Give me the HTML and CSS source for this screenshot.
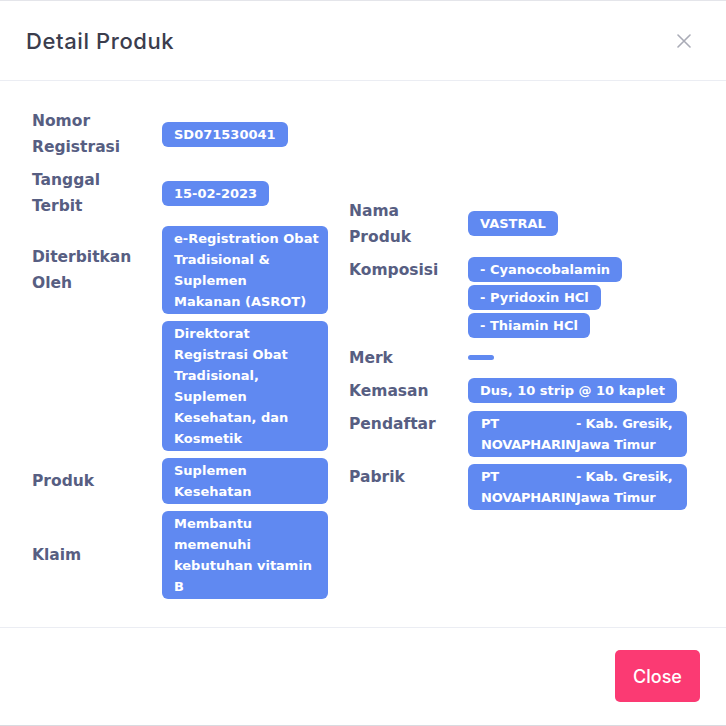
FILE: index.html
```html
<!DOCTYPE html>
<html lang="id">
<head>
<meta charset="utf-8">
<title>Detail Produk</title>
<link rel="stylesheet" href="styles.css">
</head>
<body>
<div class="modal">
  <header class="modal-header">
    <h2 class="modal-title">Detail Produk</h2>
    <button class="close-x" aria-label="Close">
      <svg width="14" height="14" viewBox="0 0 14 14"><path d="M1 1L13 13M13 1L1 13" stroke="#a9abb6" stroke-width="1.6" fill="none" stroke-linecap="round"/></svg>
    </button>
  </header>
  <div class="modal-body">
    <div class="columns">
      <div class="fields fields-left">
        <div class="label">Nomor<br>Registrasi</div>
        <div class="value"><span class="badge">SD071530041</span></div>

        <div class="label">Tanggal<br>Terbit</div>
        <div class="value"><span class="badge">15-02-2023</span></div>

        <div class="label">Diterbitkan<br>Oleh</div>
        <div class="value"><span class="badge block">e-Registration Obat Tradisional &amp; Suplemen<br>Makanan (ASROT)</span></div>

        <div class="label"></div>
        <div class="value"><span class="badge block">Direktorat Registrasi Obat Tradisional, Suplemen Kesehatan, dan Kosmetik</span></div>

        <div class="label">Produk</div>
        <div class="value"><span class="badge block">Suplemen Kesehatan</span></div>

        <div class="label">Klaim</div>
        <div class="value"><span class="badge block">Membantu memenuhi kebutuhan vitamin B</span></div>
      </div>

      <div class="fields fields-right">
        <div class="label mid">Nama<br>Produk</div>
        <div class="value mid"><span class="badge">VASTRAL</span></div>

        <div class="label">Komposisi</div>
        <div class="value stack">
          <span class="badge">- Cyanocobalamin</span>
          <span class="badge">- Pyridoxin HCl</span>
          <span class="badge">- Thiamin HCl</span>
        </div>

        <div class="label">Merk</div>
        <div class="value mid"><span class="badge empty"></span></div>

        <div class="label">Kemasan</div>
        <div class="value"><span class="badge">Dus, 10 strip @ 10 kaplet</span></div>

        <div class="label">Pendaftar</div>
        <div class="value"><span class="badge split"><span class="part-a">PT NOVAPHARIN</span><span class="part-b">- Kab. Gresik, Jawa Timur</span></span></div>

        <div class="label">Pabrik</div>
        <div class="value"><span class="badge split"><span class="part-a">PT NOVAPHARIN</span><span class="part-b">- Kab. Gresik, Jawa Timur</span></span></div>
      </div>
    </div>
  </div>
  <footer class="modal-footer">
    <button class="btn-close">Close</button>
  </footer>
</div>
</body>
</html>
```

FILE: styles.css
```css
* { box-sizing: border-box; }
html, body { margin: 0; padding: 0; background: #ffffff; }
body { font-family: Inter, "Noto Sans", sans-serif; }

.modal {
  width: 726px;
  height: 726px;
  border-top: 1px solid #e4e5ea;
  border-bottom: 1px solid #d9dae0;
  display: flex;
  flex-direction: column;
  background: #fff;
}

.modal-header {
  height: 80px;
  flex: none;
  display: flex;
  align-items: center;
  justify-content: space-between;
  padding: 0 35px 0 26px;
  border-bottom: 1px solid #ebedf3;
}
.modal-title {
  margin: 0;
  font-size: 22px;
  font-weight: 500;
  color: #3b3d4d;
  letter-spacing: 0.6px;
}
.close-x {
  border: 0;
  background: none;
  padding: 0;
  width: 14px;
  height: 14px;
  display: flex;
}

.modal-body {
  flex: 1;
  padding: 27px 0 0 32px;
  border-bottom: 1px solid #ebedf3;
}
.columns {
  display: flex;
  align-items: center;
  gap: 21px;
}

.fields {
  display: grid;
  row-gap: 7px;
}
.fields-left {
  grid-template-columns: 130px 166px;
  align-items: center;
}
.fields-right {
  grid-template-columns: 119px auto;
  align-items: start;
}
.mid { align-self: center; }

.label {
  font-family: "DejaVu Sans", sans-serif;
  font-size: 15.5px;
  font-weight: 700;
  line-height: 26px;
  color: #575e82;
}

.value { display: flex; }
.stack { flex-direction: column; align-items: flex-start; gap: 3px; }

.badge {
  display: inline-block;
  background: #6089f1;
  color: #fff;
  font-family: "DejaVu Sans", sans-serif;
  font-size: 13px;
  font-weight: 700;
  line-height: 21px;
  padding: 2px 12px;
  border-radius: 6px;
}
.badge.block { width: 166px; padding: 2px 7px 2px 12px; }
.badge.empty { padding: 2px 13px; height: 5px; border-radius: 3px; }
.badge.split { display: flex; padding: 2px 13px; letter-spacing: -0.2px; }
.part-a { width: min-content; flex: none; }
.part-b { width: 98px; flex: none; }

.modal-footer {
  height: 97px;
  flex: none;
  display: flex;
  justify-content: flex-end;
  align-items: flex-start;
  padding: 22px 26px 0 0;
}
.btn-close {
  width: 85px;
  height: 52px;
  border: 0;
  border-radius: 5px;
  background: #fb3a73;
  color: #fff;
  font-family: Inter, "Noto Sans", sans-serif;
  font-size: 18px;
  font-weight: 500;
}
```
